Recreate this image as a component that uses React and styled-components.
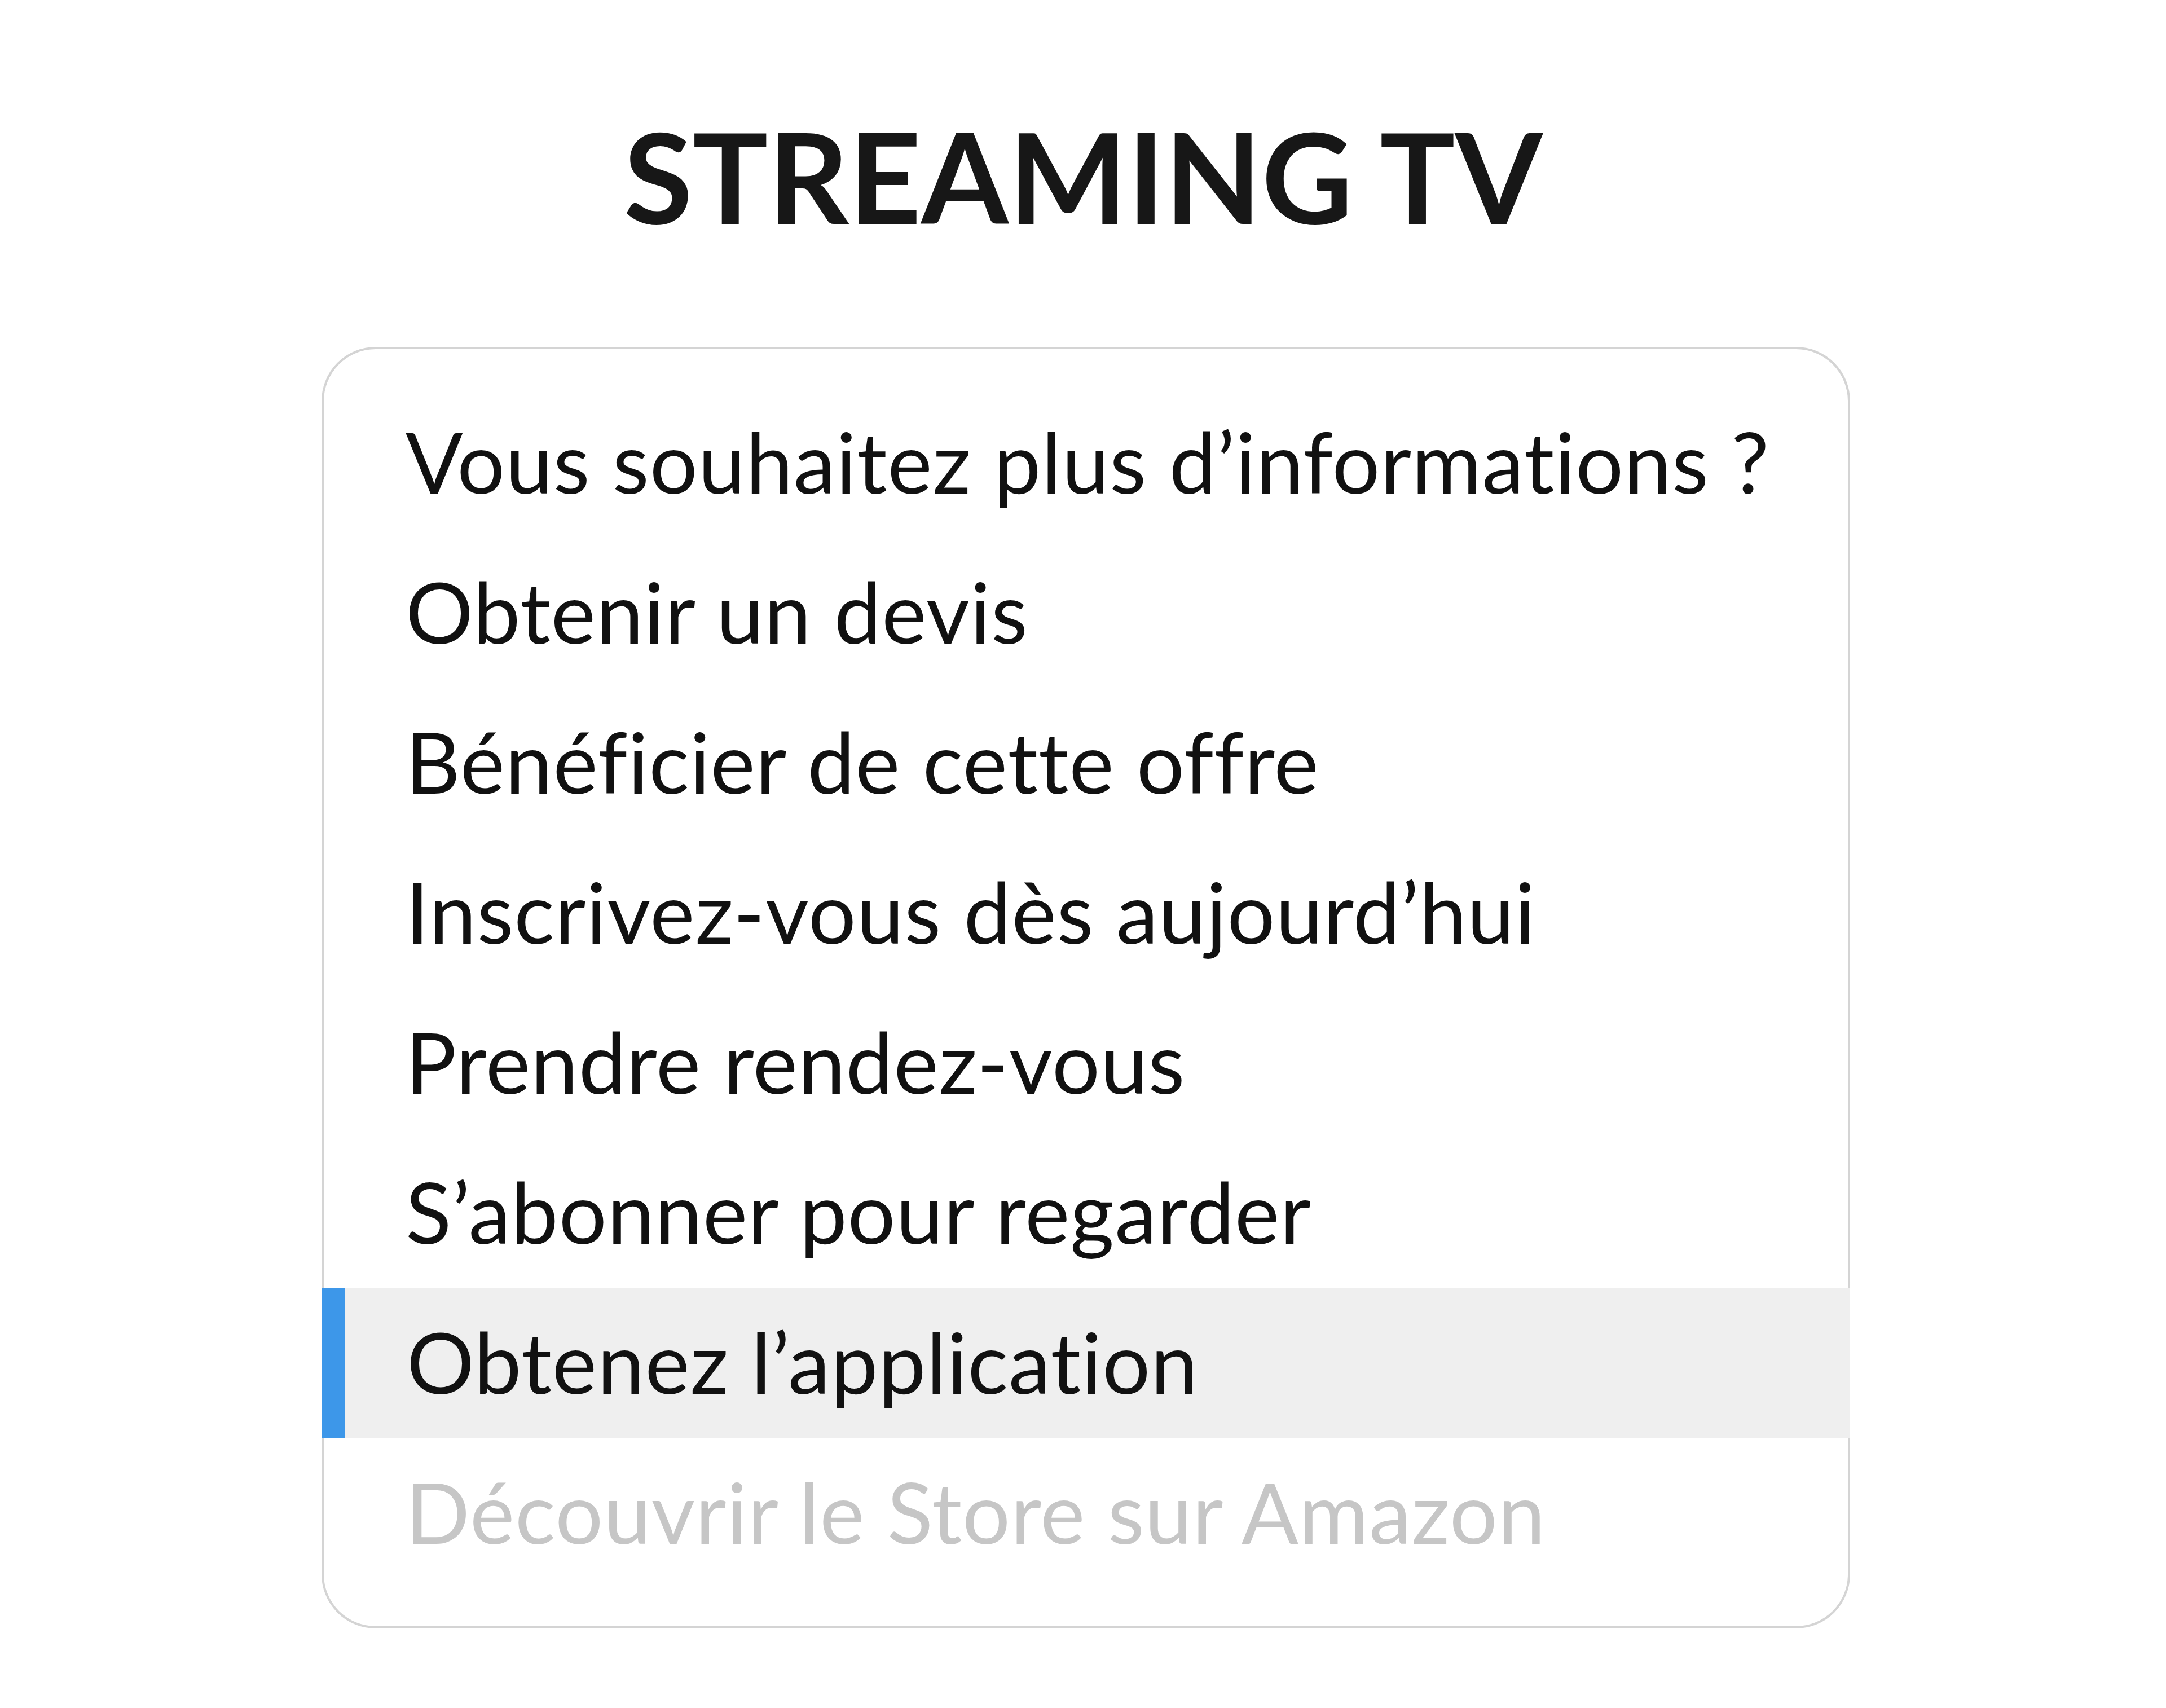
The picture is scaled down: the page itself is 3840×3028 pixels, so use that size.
import React from 'react';
import styled, { createGlobalStyle } from 'styled-components';

const GlobalStyle = createGlobalStyle`
  html, body {
    margin: 0;
    padding: 0;
    background: #ffffff;
  }
`;

const Page = styled.main`
  display: flex;
  flex-direction: column;
  align-items: center;
  padding-top: 177px;
  padding-bottom: 120px;
  font-family: Lato, 'Liberation Sans', sans-serif;
  font-variant-ligatures: none;
  font-feature-settings: 'liga' 0, 'clig' 0;
`;

const Title = styled.h1`
  margin: 0 0 170px;
  font-size: 223px;
  line-height: 1.2;
  font-weight: 700;
  letter-spacing: 0;
  color: #171717;
`;

const Menu = styled.ul`
  list-style: none;
  margin: 0 0 0 10px;
  padding: 68px 0;
  width: 2710px;
  box-sizing: border-box;
  border: 4px solid #d4d4d4;
  border-radius: 96px;
  background: #ffffff;
`;

const Item = styled.li`
  display: flex;
  align-items: center;
  height: 266px;
  padding-left: ${({ $active }) => ($active ? '109px' : '145px')};
  padding-bottom: 6px;
  box-sizing: border-box;
  margin: ${({ $active }) => ($active ? '0 -4px' : '0')};
  border-left: ${({ $active }) => ($active ? '42px solid #3d97e9' : 'none')};
  background: ${({ $active }) => ($active ? '#efefef' : 'transparent')};
  font-size: 150px;
  font-weight: 400;
  letter-spacing: 0.9px;
  color: ${({ $disabled }) => ($disabled ? '#c6c6c6' : '#111111')};
  white-space: nowrap;
`;

const items = [
  { label: 'Vous souhaitez plus d’informations ?' },
  { label: 'Obtenir un devis' },
  { label: 'Bénéficier de cette offre' },
  { label: 'Inscrivez-vous dès aujourd’hui' },
  { label: 'Prendre rendez-vous' },
  { label: 'S’abonner pour regarder' },
  { label: 'Obtenez l’application', active: true },
  { label: 'Découvrir le Store sur Amazon', disabled: true }
];

const App = () => (
  <>
    <GlobalStyle />
    <Page>
      <Title>STREAMING TV</Title>
      <Menu>
        {items.map(item => (
          <Item key={item.label} $active={item.active} $disabled={item.disabled}>
            {item.label}
          </Item>
        ))}
      </Menu>
    </Page>
  </>
);

export default App;
